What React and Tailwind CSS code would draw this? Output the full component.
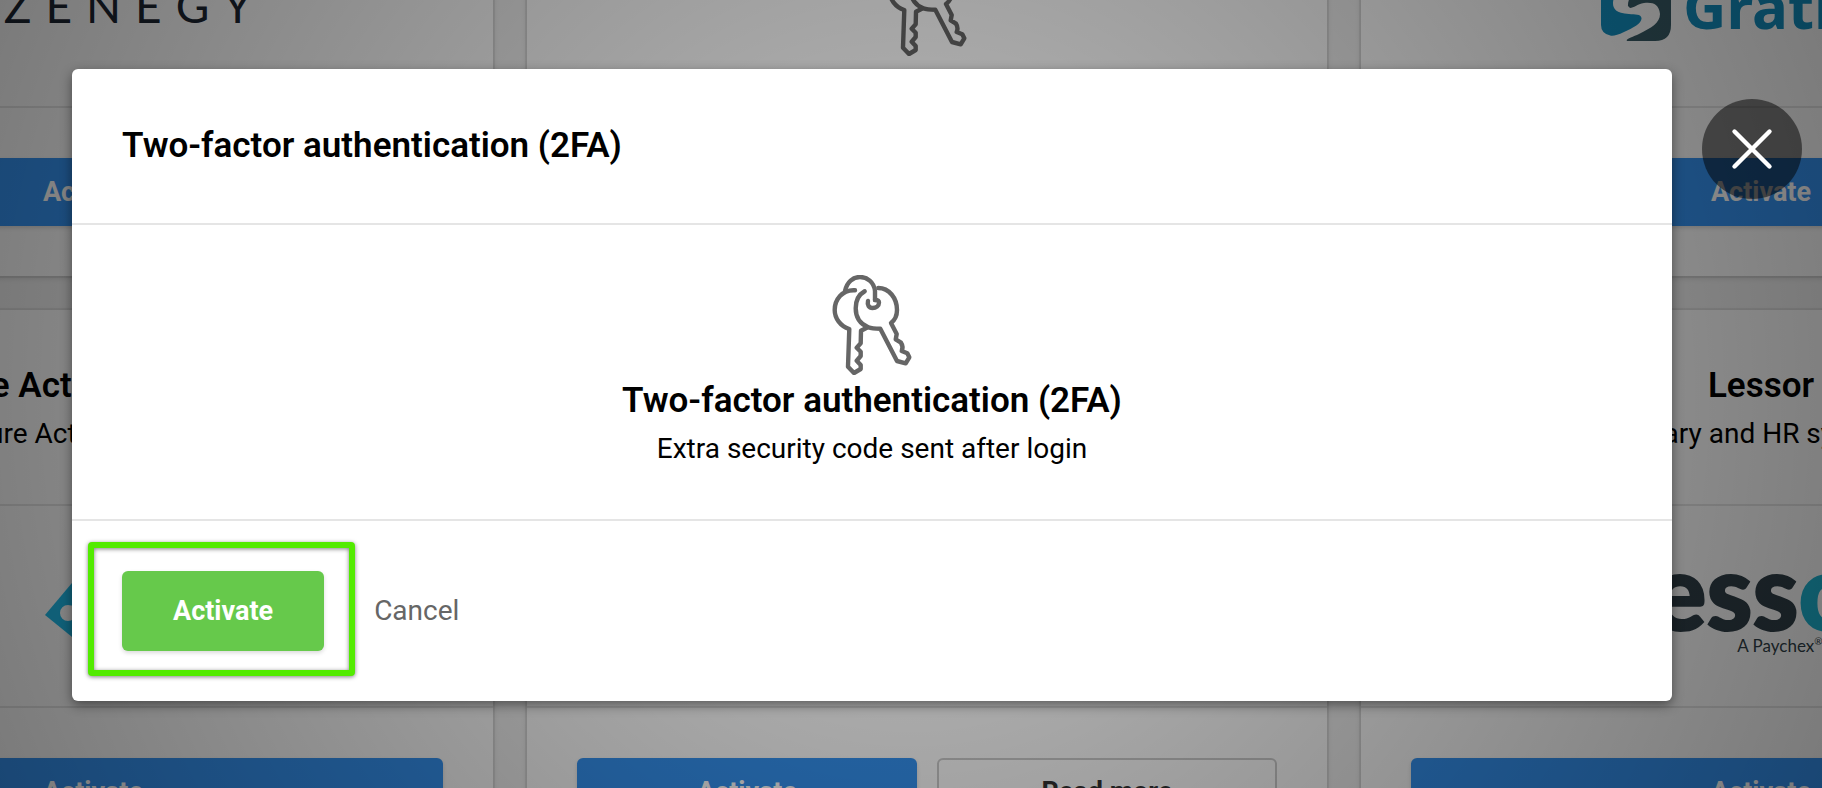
// src/App.jsx
import React from 'react';

const KeysIcon = () => (
  <svg
    viewBox="0 0 100 100"
    className="w-[100px] h-[100px] shrink-0 text-[#666666]"
    fill="none"
    stroke="currentColor"
    strokeWidth="4.4"
    strokeLinecap="round"
    strokeLinejoin="round"
    aria-hidden="true"
  >
    <path d="M23 16C25 7 31 2 38 2S52 7 53 16V25" />
    <path d="M46 26C45 30 47 33 50.500 33S57 31 57 27.500C57 26 56 25 53 25" />
    <path d="M33 15.300C20 14.500 12.700 25 12.700 35C12.700 43 18 51 27.300 54L26 91.700L32 98L38.700 94V90L34.700 85.700L38.700 81V76.700L34.700 72.700L38.700 68.300L39 55.700L45.300 52.500" />
    <path d="M42.700 16.300C36 20 33.700 27 33.700 33.300C33.700 42 38 49 46.300 52.300C50 53.700 54 53.700 58.300 53.700L75 86L83.700 88.300L87.300 82.300L85.300 78.300L79.700 76C81 73 80.500 70 79 67.700L73.700 64.300L74.700 59L69 48C73 45 75 40 75 35C75 23 67 13 56.300 13" />
  </svg>
);

const ZenegyLogo = () => (
  <div className="w-[318px] flex justify-end gap-[14px] font-[Lato,sans-serif] text-[46px] leading-none text-[#1b2430]">
    {'ZENEGY'.split('').map((letter, i) => (
      <span key={i}>{letter}</span>
    ))}
  </div>
);

const GratisalLogo = () => (
  <div className="w-[320px] flex items-center gap-3">
    <svg viewBox="0 0 70 70" className="w-[70px] h-[70px] shrink-0" aria-hidden="true">
      <path
        fill="#138fc0"
        d="M0 16Q0 0 16 0H54C36 4 12 18 12 32C12 38 15 42 28 43C34 43.500 40 43 40.500 47C41 52 32 57 23 61C17 64 13 65 10 64.700Q0 63 0 54Z"
      />
      <path
        fill="#385b66"
        d="M27 35C26 24 40 12 60 1Q70 4 70 16V54Q70 70 54 70H26C24 68 32 66 38 63C50 57 59 52 59 43C58 33 52 31 43 32C36 33 33 37 29 37Z"
      />
    </svg>
    <span className="font-['Noto_Sans',sans-serif] font-bold text-[60px] leading-none text-[#138fc0]">
      Gratisal
    </span>
  </div>
);

const AzureLogo = () => (
  <svg viewBox="0 0 100 100" className="w-[100px] h-[100px]" aria-hidden="true">
    <path fill="#1fbbea" d="M50 2L98 59L50 98L2 59Z" />
    <g stroke="#ffffff" strokeWidth="4" fill="#ffffff">
      <path d="M50 26L26 56M50 26L74 56M50 26V80" />
      <circle cx="50" cy="26" r="6" />
      <circle cx="25" cy="57" r="6" />
      <circle cx="75" cy="57" r="6" />
      <circle cx="50" cy="78" r="6" />
    </g>
  </svg>
);

const LessorLogo = () => (
  <div className="pb-3 font-[Lato,sans-serif] text-[#303f48]">
    <div className="font-black text-[104px] leading-[92px] [-webkit-text-stroke:2px]">
      less<span className="text-[#1eb4d2]">o</span>r
    </div>
    <div className="text-right text-[17px] leading-5">
      A Paychex<span className="align-top text-[10px] leading-none">®</span> Company
    </div>
  </div>
);

const ActivateButton = () => (
  <button
    type="button"
    className="flex-1 h-[68px] rounded-md border-2 border-[#3593f2] bg-[#3593f2] text-white font-bold text-[27px] shadow-[0_2px_4px_rgba(0,0,0,0.15)]"
  >
    Activate
  </button>
);

const ReadMoreButton = () => (
  <button
    type="button"
    className="flex-1 h-[68px] rounded-md border-2 border-[#cccccc] bg-white text-[#333333] font-bold text-[27px]"
  >
    Read more
  </button>
);

const Card = ({ title, subtitle, logo, header = true, readMore }) => (
  <article className="bg-white shadow-[0_0_0_2px_rgba(0,0,0,0.06),0_2px_6px_rgba(0,0,0,0.14)]">
    {header && (
      <header className="h-[196px] pt-[50px] border-b-2 border-[#e6e6e6] text-center text-black">
        <h2 className="text-[35px] leading-[52px] font-semibold">{title}</h2>
        <p className="text-[28px] leading-[44px]">{subtitle}</p>
      </header>
    )}
    <div className="h-[202px] border-b-2 border-[#e6e6e6] flex items-center justify-center">
      {logo}
    </div>
    <footer className="p-[50px] flex gap-5">
      <ActivateButton />
      {readMore && <ReadMoreButton />}
    </footer>
  </article>
);

const IntegrationGrid = () => (
  <main className="-mt-[94px] -ml-[307px] -mr-[339px] grid grid-cols-3 gap-[34px]">
    <Card header={false} logo={<ZenegyLogo />} />
    <Card header={false} logo={<KeysIcon />} />
    <Card header={false} logo={<GratisalLogo />} />
    <Card title="Azure Active Directory" subtitle="Azure Active Directory" logo={<AzureLogo />} />
    <Card readMore />
    <Card title="Lessor" subtitle="Salary and HR system" logo={<LessorLogo />} />
  </main>
);

const Modal = () => (
  <section
    role="dialog"
    aria-labelledby="modal-title"
    className="flex-1 rounded-md bg-white text-black shadow-[0_4px_12px_rgba(0,0,0,0.45)]"
  >
    <header className="px-[50px] py-[51px] border-b-2 border-[#e5e5e5]">
      <h1 id="modal-title" className="text-[35px] leading-[52px] font-semibold">
        Two-factor authentication (2FA)
      </h1>
    </header>

    <div className="pt-[50px] pb-12 flex flex-col items-center border-b-2 border-[#e5e5e5]">
      <KeysIcon />
      <h2 className="text-[35px] leading-[52px] font-semibold">Two-factor authentication (2FA)</h2>
      <p className="text-[28px] leading-[44px]">Extra security code sent after login</p>
    </div>

    <footer className="p-[50px] flex items-center gap-[50px]">
      <div className="relative">
        <button
          type="button"
          className="h-20 px-[51px] rounded-md bg-[#66c94b] text-white font-bold text-[27px] shadow-[0_2px_4px_rgba(0,0,0,0.15)]"
        >
          Activate
        </button>
        {/* highlight frame around the primary action */}
        <div className="absolute -top-[29px] -bottom-[25px] -left-[34px] -right-[31px] rounded-sm border-6 border-[#52eb00] pointer-events-none drop-shadow-[0_1px_2px_rgba(0,0,0,0.5)]" />
      </div>
      <button type="button" className="text-[28px] text-[#666666]">
        Cancel
      </button>
    </footer>
  </section>
);

const App = () => (
  <div className="relative h-screen overflow-hidden flow-root bg-[#f2f2f2] font-[Roboto,sans-serif]">
    <IntegrationGrid />

    <div className="absolute inset-0 flex items-start gap-[30px] pt-[69px] pl-[72px] pr-5 bg-[radial-gradient(circle,rgba(0,0,0,0.25),rgba(0,0,0,0.52))]">
      <Modal />
      <button
        type="button"
        aria-label="Close"
        className="mt-[30px] w-[100px] h-[100px] shrink-0 rounded-full bg-black/50 text-white"
      >
        <svg viewBox="0 0 100 100" fill="none" stroke="currentColor" strokeWidth="4.4" strokeLinecap="round">
          <path d="M32.500 32.500L67.500 67.500M67.500 32.500L32.500 67.500" />
        </svg>
      </button>
    </div>
  </div>
);

export default App;
